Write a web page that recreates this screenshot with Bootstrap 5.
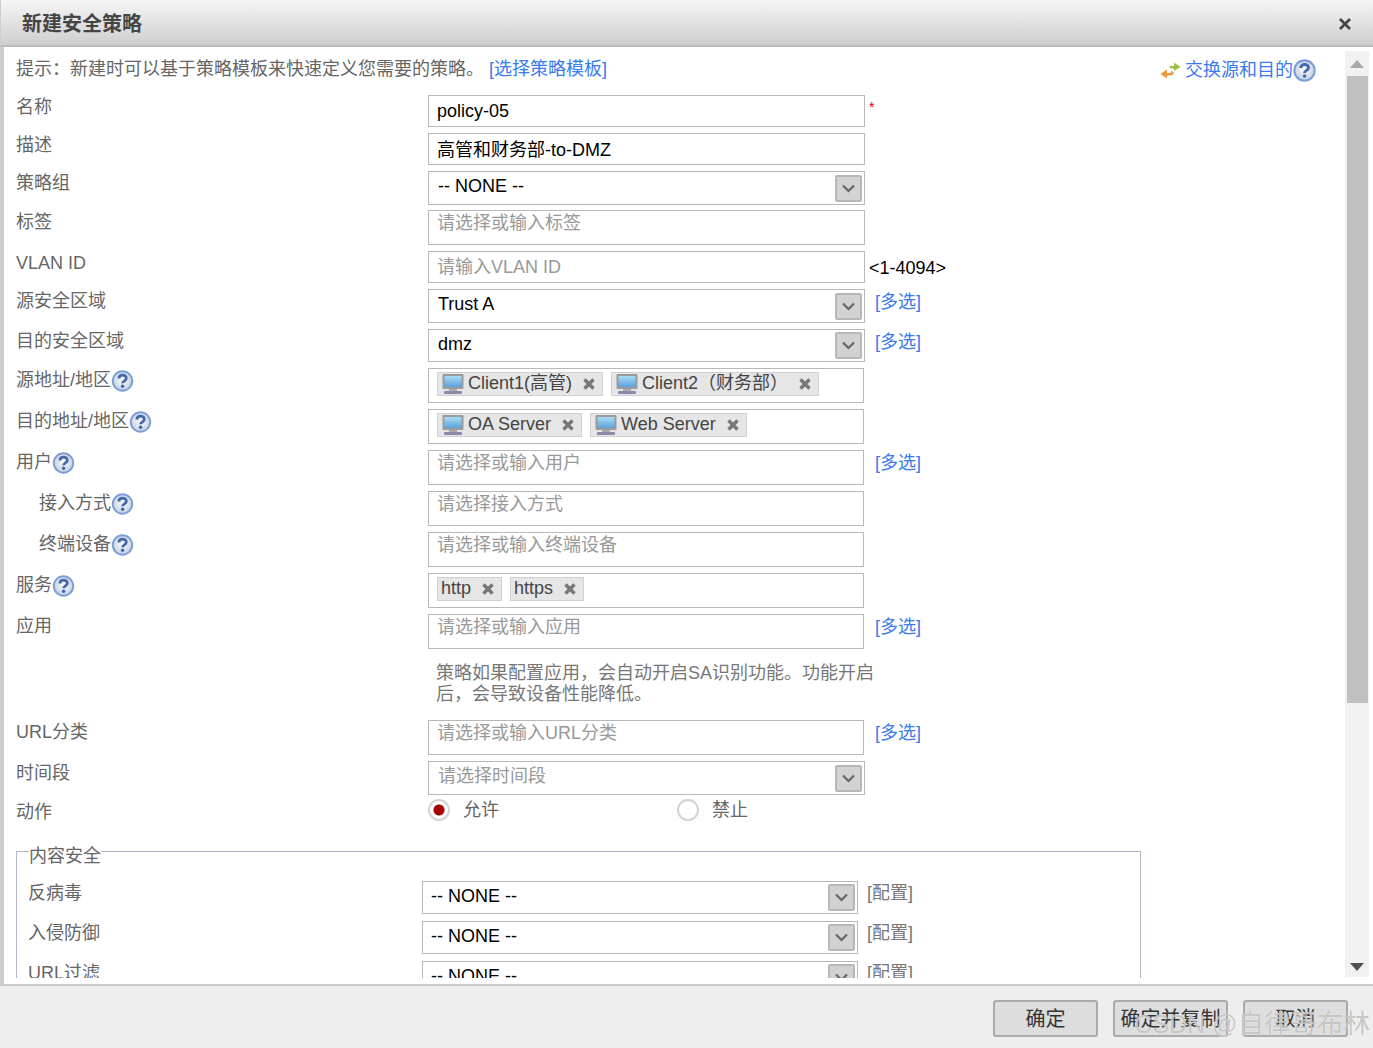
<!DOCTYPE html>
<html lang="zh"><head><meta charset="utf-8"><title>新建安全策略</title>
<link rel="stylesheet" href="https://cdn.jsdelivr.net/npm/bootstrap@5.3.0/dist/css/bootstrap.min.css">
<style>
html,body{height:1048px;overflow:hidden}
body{font-family:"Liberation Sans","Noto Sans CJK SC",sans-serif;font-size:18px;line-height:20px;color:#666;background:#fff}
.dlg-head{height:47px;padding:3px 21px 0 21px;background:linear-gradient(#f6f6f6,#cecece);border-bottom:2px solid #bcbcbc;border-left:1px solid #ccc}
.dlg-title{font-size:20px;font-weight:700;color:#444;line-height:24px}
.dlg-main{height:939px;border-left:4px solid #ccc;border-bottom:2px solid #ccc}
.dlg-scroll{height:931px;overflow:hidden;padding-left:12px}
.tip-row{height:48px;padding:12px 29px 0 0}
.swap{height:22px}
.lnk{color:#3a7bef;text-decoration:none}
.frow{margin-bottom:6px}
.flabel{width:412px;padding-top:2px;flex:none}
.flabel-sub{padding-left:23px}
.h32{height:32px}.h33{height:33px}.h34{height:34px}.h35{height:35px}
.gap5{margin-bottom:5px}
.gap3{margin-bottom:3px}
.fbox{width:437px;flex:none;border:1px solid #b8b8b8;background:#fff;color:#000;padding:0 2px 0 9px;line-height:30px}
.fbox>span:first-child{margin-bottom:4px}
.fbox.chips>span:first-child{margin-bottom:0}
.fbox.form-control{border-radius:0;font-size:18px;line-height:30px;color:#000;padding:0 8px;box-shadow:none}
.fbox.form-control.h35{padding-bottom:8px}
.fbox.form-control.up2{padding-bottom:2px}
.fbox.form-control::placeholder{color:#999;opacity:1}
.fbox.w436{width:436px}
.ph-txt{color:#999}
.sel-btn{width:27px;height:27px;flex:none;background:#d2d2d2;border:2px solid #b8b8b8;border-radius:2px}
.fbox.chips{padding:3px 8px;gap:8px}
.chip{height:24px;line-height:20px;background:#e6e6e6;border:1px solid #d0d0d0;color:#444;padding:0 6px 0 3px;gap:3px}
.xic{width:14px;height:14px;margin:4px 0 0 7px;flex:none}
.after{padding:7px 0 0 4px;color:#000}
.multi{padding:3px 0 0 10px;color:#3a7bef}
.w436 + .multi{padding-left:11px}
.star{color:#d00;padding-left:4px;padding-top:2px;font-size:14px}
.hint-txt{width:445px;margin:14px 0 15px 420px;line-height:21px;color:#777}
.radio-row{height:24px;margin-bottom:19px}
.radio-row .flabel{padding-top:4px}
.form-check-input.rd{width:22px;height:22px;margin:0;border:2px solid #d4d4d4;box-shadow:none;flex:none;background-color:#fff}
.form-check-input.rd:checked{background:#fff radial-gradient(circle,#a80000 0 5px,#fff 6px);border-color:#d4d4d4}
.rd-wrap{width:249px;gap:13px;line-height:20px}
fieldset.fs{width:1125px;border:1px solid #b5b5c8;padding:0 11px 70px;margin:0}
fieldset.fs legend{float:none;width:auto;height:20px;line-height:30px;font-size:18px;margin:0 0 20px 1px;padding:0;color:#666}
.fs .frow{margin-bottom:7px}
.fs .flabel{width:394px;padding-top:2px}
.fs .fbox{width:436px;padding-left:8px}
.cfg{padding:2px 0 0 9px;color:#777}
.sbar{width:24px;height:926px;margin:4px 4px 0 0;background:#f1f1f1;flex:none}
.sb-up{height:25px}
.sb-thumb{height:627px;margin:0 1px 0 2px;background:#c0c0c0}
.sb-down{height:274px;padding-bottom:6px}
.dlg-foot{height:62px;background:#eee;padding:14px 25px 0 0;gap:15px;align-items:flex-start}
.fbtn.btn{height:37px;width:105px;padding:0;font-size:20px;line-height:35px;color:#333;background:#ddd;border:2px solid #aaa;border-radius:3px}
.fbtn.wide{width:115px}
.wm{position:absolute;right:3px;bottom:8px;font-size:26.5px;line-height:32px;color:rgba(120,120,120,.42);text-shadow:0 0 1px #fff;white-space:nowrap}
.wm-lat{font-size:25px}
</style></head>
<body>
<svg width="0" height="0" class="position-absolute"><defs>
<radialGradient id="hg" cx=".5" cy=".45" r=".55"><stop offset="0" stop-color="#fafafa"/><stop offset="1" stop-color="#c4d0e4"/></radialGradient>
<linearGradient id="sc" x1="0" y1="0" x2="0" y2="1"><stop offset="0" stop-color="#a8dcf6"/><stop offset="1" stop-color="#5aa2dc"/></linearGradient>
<symbol id="help" viewBox="0 0 22 22"><circle cx="11" cy="11" r="9.7" fill="url(#hg)" stroke="#7d9fd6" stroke-width="2"/><path d="M7.4 8.600c0-4.500 7.400-4.500 7.400-.3 0 2.600-3.700 2.500-3.700 5" fill="none" stroke="#4468a8" stroke-width="2.800"/><circle cx="11.100" cy="16.200" r="1.700" fill="#4468a8"/></symbol>
<symbol id="pc" viewBox="0 0 24 22"><rect x="1.500" y="1" width="21" height="15" rx="1" fill="#9a9a9a"/><rect x="3.500" y="3" width="17" height="11" fill="url(#sc)"/><rect x="8" y="16" width="8" height="2" fill="#aaa"/><rect x="3" y="18" width="18" height="3" rx="1" fill="#8a8aa8"/></symbol>
<symbol id="dn" viewBox="0 0 23 23"><path d="M6 8.500l5.500 5.500L17 8.500" fill="none" stroke="#666" stroke-width="2.200"/></symbol>
<symbol id="xx" viewBox="0 0 14 14"><path d="M2.500 2.500l9 9M11.500 2.500l-9 9" stroke="#777" stroke-width="3.400"/></symbol>
</defs></svg>

<header class="dlg-head d-flex align-items-center justify-content-between">
  <div class="dlg-title">新建安全策略</div>
  <svg width="14" height="14" viewBox="0 0 14 14"><path d="M2 2l10 10M12 2L2 12" stroke="#444" stroke-width="2.800"/></svg>
</header>

<main class="dlg-main d-flex">
  <div class="dlg-scroll flex-grow-1">
    <div class="tip-row d-flex justify-content-between">
      <div>提示：新建时可以基于策略模板来快速定义您需要的策略。 <a href="#" class="lnk">[选择策略模板]</a></div>
      <div class="swap d-flex align-items-center align-self-start">
        <svg width="21" height="18" viewBox="0 0 21 18" class="me-1"><path d="M9 5h5V1.500L20.500 6 14 10V7.500H10.500z" fill="#9cc04c"/><path d="M11 9.500v2.500h-4V8.500L.5 13 7 17.500V14.500h5l2-3z" fill="#ee9a3c"/></svg>
        <a href="#" class="lnk">交换源和目的</a><svg width="23" height="23"><use href="#help"/></svg>
      </div>
    </div>

    <div class="frow d-flex h32"><div class="flabel">名称</div><input class="fbox form-control h32" value="policy-05" aria-label="名称"><div class="star">*</div></div>
    <div class="frow d-flex h32"><div class="flabel">描述</div><input class="fbox form-control h32 up2" value="高管和财务部-to-DMZ" aria-label="描述"></div>
    <div class="frow gap5 d-flex h34"><div class="flabel">策略组</div><div class="fbox d-flex align-items-center justify-content-between"><span>-- NONE --</span><span class="sel-btn d-flex"><svg width="23" height="23"><use href="#dn"/></svg></span></div></div>
    <div class="frow d-flex h35"><div class="flabel">标签</div><input class="fbox form-control h35" placeholder="请选择或输入标签" aria-label="标签"></div>
    <div class="frow d-flex h32"><div class="flabel">VLAN ID</div><input class="fbox form-control h32" placeholder="请输入VLAN ID" aria-label="VLAN ID"><div class="after">&lt;1-4094&gt;</div></div>
    <div class="frow d-flex h34"><div class="flabel">源安全区域</div><div class="fbox d-flex align-items-center justify-content-between"><span>Trust A</span><span class="sel-btn d-flex"><svg width="23" height="23"><use href="#dn"/></svg></span></div><a href="#" class="lnk multi">[多选]</a></div>
    <div class="frow d-flex h33"><div class="flabel">目的安全区域</div><div class="fbox d-flex align-items-center justify-content-between"><span>dmz</span><span class="sel-btn d-flex"><svg width="23" height="23"><use href="#dn"/></svg></span></div><a href="#" class="lnk multi">[多选]</a></div>
    <div class="frow d-flex h35"><div class="flabel d-flex">源地址/地区<svg width="23" height="22"><use href="#help"/></svg></div>
      <div class="fbox w436 chips d-flex"><span class="chip d-flex"><svg width="24" height="22"><use href="#pc"/></svg><span>Client1(高管)</span><svg class="xic"><use href="#xx"/></svg></span>
        <span class="chip d-flex"><svg width="24" height="22"><use href="#pc"/></svg><span>Client2（财务部）</span><svg class="xic"><use href="#xx"/></svg></span></div></div>
    <div class="frow d-flex h35"><div class="flabel d-flex">目的地址/地区<svg width="23" height="22"><use href="#help"/></svg></div>
      <div class="fbox w436 chips d-flex"><span class="chip d-flex"><svg width="24" height="22"><use href="#pc"/></svg><span>OA Server</span><svg class="xic"><use href="#xx"/></svg></span>
        <span class="chip d-flex"><svg width="24" height="22"><use href="#pc"/></svg><span>Web Server</span><svg class="xic"><use href="#xx"/></svg></span></div></div>
    <div class="frow d-flex h35"><div class="flabel d-flex">用户<svg width="23" height="22"><use href="#help"/></svg></div><input class="fbox w436 form-control h35" placeholder="请选择或输入用户" aria-label="用户"><a href="#" class="lnk multi">[多选]</a></div>
    <div class="frow d-flex h35"><div class="flabel flabel-sub d-flex">接入方式<svg width="23" height="22"><use href="#help"/></svg></div><input class="fbox w436 form-control h35" placeholder="请选择接入方式" aria-label="接入方式"></div>
    <div class="frow d-flex h35"><div class="flabel flabel-sub d-flex">终端设备<svg width="23" height="22"><use href="#help"/></svg></div><input class="fbox w436 form-control h35" placeholder="请选择或输入终端设备" aria-label="终端设备"></div>
    <div class="frow d-flex h35"><div class="flabel d-flex">服务<svg width="23" height="22"><use href="#help"/></svg></div>
      <div class="fbox w436 chips d-flex"><span class="chip d-flex"><span>http</span><svg class="xic"><use href="#xx"/></svg></span><span class="chip d-flex"><span>https</span><svg class="xic"><use href="#xx"/></svg></span></div></div>
    <div class="d-flex h35"><div class="flabel">应用</div><input class="fbox w436 form-control h35" placeholder="请选择或输入应用" aria-label="应用"><a href="#" class="lnk multi">[多选]</a></div>
    <div class="hint-txt">策略如果配置应用，会自动开启SA识别功能。功能开启后，会导致设备性能降低。</div>
    <div class="frow d-flex h35"><div class="flabel">URL分类</div><input class="fbox w436 form-control h35" placeholder="请选择或输入URL分类" aria-label="URL分类"><a href="#" class="lnk multi">[多选]</a></div>
    <div class="frow gap3 d-flex h34"><div class="flabel">时间段</div><div class="fbox d-flex align-items-center justify-content-between"><span class="ph-txt">请选择时间段</span><span class="sel-btn d-flex"><svg width="23" height="23"><use href="#dn"/></svg></span></div></div>
    <div class="radio-row d-flex"><div class="flabel">动作</div>
      <label class="rd-wrap d-flex align-items-center"><input type="radio" name="act" class="form-check-input rd" checked><span>允许</span></label>
      <label class="rd-wrap d-flex align-items-center"><input type="radio" name="act" class="form-check-input rd"><span>禁止</span></label>
    </div>
    <fieldset class="fs">
      <legend>内容安全</legend>
      <div class="frow d-flex h33"><div class="flabel">反病毒</div><div class="fbox d-flex align-items-center justify-content-between"><span>-- NONE --</span><span class="sel-btn d-flex"><svg width="23" height="23"><use href="#dn"/></svg></span></div><div class="cfg">[配置]</div></div>
      <div class="frow d-flex h33"><div class="flabel">入侵防御</div><div class="fbox d-flex align-items-center justify-content-between"><span>-- NONE --</span><span class="sel-btn d-flex"><svg width="23" height="23"><use href="#dn"/></svg></span></div><div class="cfg">[配置]</div></div>
      <div class="frow d-flex h33"><div class="flabel">URL过滤</div><div class="fbox d-flex align-items-center justify-content-between"><span>-- NONE --</span><span class="sel-btn d-flex"><svg width="23" height="23"><use href="#dn"/></svg></span></div><div class="cfg">[配置]</div></div>
    </fieldset>
  </div>
  <div class="sbar d-flex flex-column">
    <div class="sb-up d-flex align-items-center justify-content-center"><svg width="14" height="8"><path d="M7 0l7 8H0z" fill="#a8a8a8"/></svg></div>
    <div class="sb-thumb"></div>
    <div class="sb-down d-flex align-items-end justify-content-center"><svg width="14" height="8"><path d="M0 0h14L7 8z" fill="#505050"/></svg></div>
  </div>
</main>

<footer class="dlg-foot d-flex justify-content-end">
  <button class="btn fbtn">确定</button>
  <button class="btn fbtn wide">确定并复制</button>
  <button class="btn fbtn">取消</button>
</footer>
<div class="wm"><span class="wm-lat">CSDN @</span>自律哥布林</div>
</body></html>
